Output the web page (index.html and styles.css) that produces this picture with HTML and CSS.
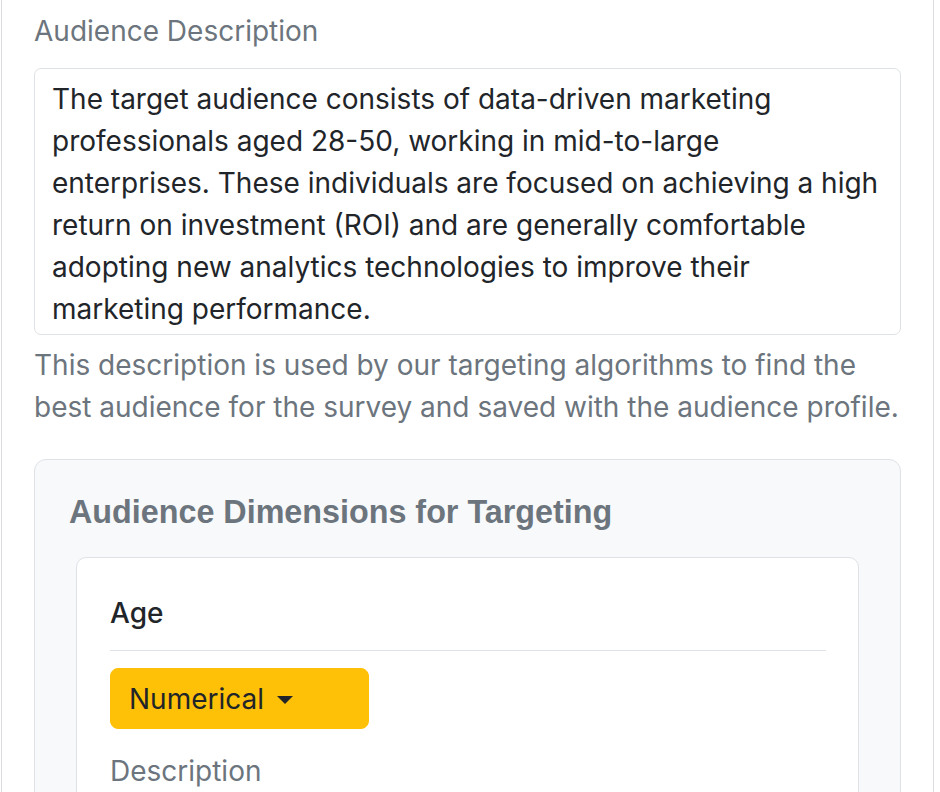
FILE: index.html
```html
<!DOCTYPE html>
<html>
<head>
    <meta charset="utf-8" />
    <title>Audience</title>
    <link rel="stylesheet" href="styles.css">
</head>
<body>

<div class="panel">
    <label class="field-label" for="audience-desc">Audience Description</label>
    <textarea id="audience-desc" class="form-control">The target audience consists of data-driven marketing professionals aged 28-50, working in mid-to-large enterprises. These individuals are focused on achieving a high return on investment (ROI) and are generally comfortable adopting new analytics technologies to improve their marketing performance.</textarea>
    <div class="form-text">This description is used by our targeting algorithms to find the best audience for the survey and saved with the audience profile.</div>

    <div class="dims-card">
        <h5 class="dims-title">Audience Dimensions for Targeting</h5>
        <div class="dim-card">
            <div class="dim-name">Age</div>
            <hr class="dim-sep" />
            <button class="dim-type">Numerical<span class="caret"></span></button>
            <div class="field-label">Description</div>
        </div>
    </div>
</div>

</body>
</html>
```

FILE: styles.css
```css
html, body {
    margin: 0;
    background: #fff;
}
body {
    font-family: Inter, "Liberation Sans", sans-serif;
    font-size: 28px;
    line-height: 1.5;
    color: #212529;
    overflow: hidden;
}
.panel {
    box-sizing: border-box;
    width: 933px;
    height: 792px;
    margin-left: 1px;
    padding: 10px 32px 0 32px;
    border-left: 1px solid #dadcdf;
    border-right: 1px solid #dadcdf;
    overflow: hidden;
}
.field-label {
    display: block;
    color: #6c757d;
    margin-bottom: 16px;
}
.form-control {
    display: block;
    box-sizing: border-box;
    width: 100%;
    height: 267px;
    margin: 0;
    padding: 9px 17px;
    font: inherit;
    color: #212529;
    border: 1px solid #dee2e6;
    border-radius: 7px;
    resize: none;
    overflow: hidden;
}
.form-text {
    margin-top: 9px;
    color: #6c757d;
}
.dims-card {
    margin-top: 31px;
    padding: 34px 34px 0 34px;
    background: #f8f9fa;
    border: 1px solid #dee2e6;
    border-radius: 12px;
    height: 400px;
}
.dims-title {
    margin: 0 0 27px 0;
    font-family: "Liberation Sans", Arial, sans-serif;
    font-size: 32.3px;
    line-height: 36px;
    font-weight: 700;
    color: #6c757d;
}
.dim-card {
    margin: 0 7px;
    padding: 34px 32px 0 33px;
    background: #fff;
    border: 1px solid #dee2e6;
    border-radius: 10px;
    height: 300px;
}
.dim-name {
    font-weight: 500;
}
.dim-sep {
    margin: 16px 0 17px 0;
    border: 0;
    border-top: 1px solid #dee2e6;
}
.dim-type {
    display: block;
    box-sizing: border-box;
    width: 259px;
    height: 61px;
    padding: 0 18px;
    font: inherit;
    color: #212529;
    text-align: left;
    background: #ffc107;
    border: 1px solid #ffc107;
    border-radius: 8px;
    margin-bottom: 21px;
}
.caret {
    display: inline-block;
    margin-left: 13px;
    vertical-align: 5px;
    border-top: 8px solid #212529;
    border-left: 8px solid transparent;
    border-right: 8px solid transparent;
}
.dim-card .field-label {
    margin: 0;
}
```
